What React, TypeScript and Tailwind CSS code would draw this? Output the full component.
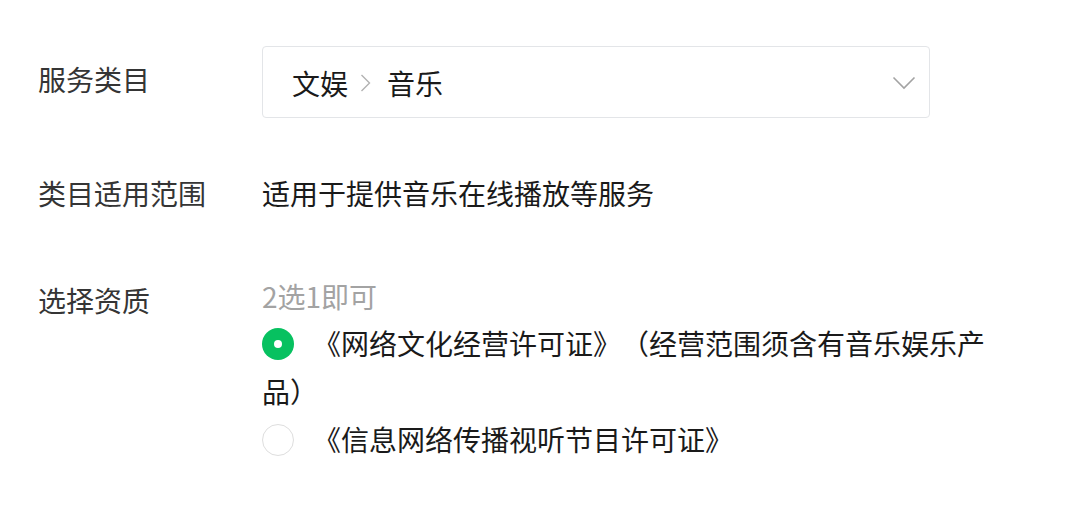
import React from "react";

const FONT = { fontFamily: '"Noto Sans CJK SC", "Noto Sans", sans-serif' };

function Chevron({ className }: { className?: string }) {
  return (
    <svg className={className} width="24" height="14" viewBox="0 0 24 14" fill="none">
      <polyline points="1.5,1.5 12,12 22.5,1.5" stroke="#a3a3a3" strokeWidth="1.6" />
    </svg>
  );
}

function Radio({ checked }: { checked?: boolean }) {
  return checked ? (
    <span className="relative mr-[19px] inline-block h-[32px] w-[32px] rounded-full bg-[#07c160] align-[-5px]">
      <span className="absolute left-[12px] top-[12px] h-[8px] w-[8px] rounded-full bg-white" />
    </span>
  ) : (
    <span className="mr-[19px] inline-block h-[32px] w-[32px] rounded-full border-[1.5px] border-[#dedede] bg-white align-[-5px]" />
  );
}

export default function App() {
  return (
    <div
      className="h-[506px] w-[1078px] bg-white pl-[38px] pt-[46px] text-[28px] [text-spacing-trim:space-all]"
      style={FONT}
    >
      {/* Service category */}
      <div className="flex">
        <div className="w-[224px] shrink-0 pt-[9px] leading-[48px] text-[#353535]">服务类目</div>
        <div className="flex h-[72px] w-[668px] items-center rounded-[4px] border border-[#e3e5e8] pl-[29px] pr-[13px] pt-[2px] leading-[48px] text-[#1a1a1a]">
          <span>文娱</span>
          <svg className="ml-[12px] mr-[16px]" width="11" height="18" viewBox="0 0 11 18" fill="none">
            <polyline points="1.5,1 9.5,9 1.5,17" stroke="#b2b2b2" strokeWidth="1.4" />
          </svg>
          <span>音乐</span>
          <Chevron className="ml-auto" />
        </div>
      </div>

      {/* Scope */}
      <div className="mt-[51px] flex leading-[48px]">
        <div className="w-[224px] shrink-0 text-[#353535]">类目适用范围</div>
        <div className="text-[#1a1a1a]">适用于提供音乐在线播放等服务</div>
      </div>

      {/* Qualification */}
      <div className="mt-[57px] flex">
        <div className="w-[224px] shrink-0 pt-[2px] leading-[48px] text-[#353535]">选择资质</div>
        <div className="w-[736px]">
          <div className="leading-[45px] text-[#a3a3a3]">2选1即可</div>
          <p className="leading-[48px] text-[#1a1a1a]">
            <Radio checked />
            《网络文化经营许可证》（经营范围须含有音乐娱乐产品）
          </p>
          <p className="leading-[48px] text-[#1a1a1a]">
            <Radio />
            《信息网络传播视听节目许可证》
          </p>
        </div>
      </div>
    </div>
  );
}
